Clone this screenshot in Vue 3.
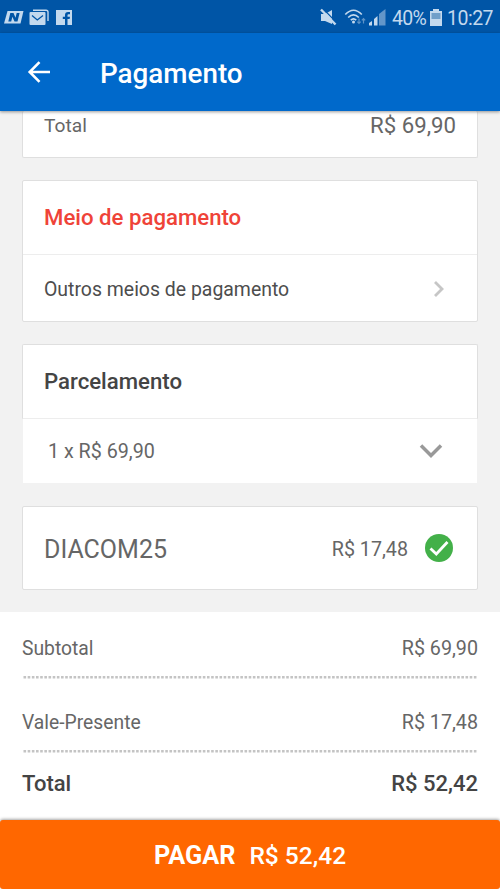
<script setup>
const rows = [
  { label: 'Subtotal', value: 'R$ 69,90' },
  { label: 'Vale-Presente', value: 'R$ 17,48' },
]
</script>

<template>
  <div class="screen">
    <div class="status">
      <svg class="notifications" viewBox="0 0 76 20" width="76" height="20">
        <path d="M7.500 3H23.500L20.500 15.500H4Z" fill="#c3d9ee" />
        <path d="M8.300 13.500 10.300 5h3.200l2 4.800L16.700 5h2.900l-2.100 8.500h-3l-2.100-4.800-1.200 4.800Z" fill="#0055a6" />
        <path d="M33 2.200H46Q48 2.200 48 4V13" fill="none" stroke="#c3d9ee" stroke-width="1.400" />
        <rect x="29.500" y="4" width="16" height="13" rx="1" fill="#c3d9ee" />
        <path d="M32 7.500 37.300 12 43 7.500" fill="none" stroke="#0055a6" stroke-width="1.300" />
        <rect x="56" y="2" width="16" height="15" fill="#c3d9ee" />
        <path d="M65 17V11H62.800V8.700H65V7Q65 4 68 4H70V6.300H68.500Q67.500 6.300 67.500 7.300V8.700H70L69.600 11H67.500V17Z" fill="#0055a6" />
      </svg>
      <div class="indicators">
        <svg viewBox="0 0 70 20" width="70" height="20">
          <path d="M3 6H7L14 2V16L7 13H3Z" fill="#c3d9ee" />
          <path d="M5.200 .800 19 15" stroke="#0055a6" stroke-width="1.200" />
          <path d="M3 1.500 17.500 16.500" stroke="#c3d9ee" stroke-width="2.400" />
          <path d="M27.300 6.500Q35.500 -2 43.800 6.500M30.200 9.500Q35.500 4.300 40.800 9.500M32.800 12.200Q35.500 9.700 38.200 12.200" fill="none" stroke="#c3d9ee" stroke-width="1.700" />
          <circle cx="35.500" cy="14" r="1.500" fill="#c3d9ee" />
          <path d="M41 10.500V15.500M39.300 13.700 41 15.500 42.700 13.700M45.500 15.500V10.500M43.800 12.300 45.500 10.500 47.200 12.300" fill="none" stroke="#5d93c7" stroke-width="1.200" />
          <path d="M51 15 54 13V17.500H51ZM56 11 59.500 8V17.500H56Z" fill="#c3d9ee" />
          <path d="M61 6 67.500 1V17.500H61Z" fill="#6396c9" />
        </svg>
        <span class="percent">40%</span>
        <svg class="battery" viewBox="0 0 12 18" width="12" height="18">
          <path d="M3 0H9V2H12V17H0V2H3Z" fill="#c3d9ee" />
          <path d="M1.500 4H10.500V10H1.500Z" fill="#709fc9" />
        </svg>
        <span class="clock">10:27</span>
      </div>
    </div>

    <header class="toolbar">
      <svg viewBox="0 0 24 22" width="24" height="22">
        <path d="M23 11H3M12.500 1.200 2.700 11 12.500 20.800" fill="none" stroke="#fff" stroke-width="2.600" />
      </svg>
      <h1>Pagamento</h1>
    </header>

    <main>
      <section class="card previous">
        <span>Total</span><span class="amount">R$ 69,90</span>
      </section>
      <section class="card method">
        <h2 class="red">Meio de pagamento</h2>
        <div class="line">
          <span>Outros meios de pagamento</span>
          <svg viewBox="0 0 12 18" width="12" height="18">
            <path d="M2 1 9 8 2 15" fill="none" stroke="#c6c6c6" stroke-width="2.800" />
          </svg>
        </div>
      </section>
      <section class="installments">
        <h2>Parcelamento</h2>
        <div class="line">
          <span>1 x R$ 69,90</span>
          <svg viewBox="0 0 24 16" width="24" height="16">
            <path d="M2 2.500 12 12.500 22 2.500" fill="none" stroke="#999" stroke-width="3.500" />
          </svg>
        </div>
      </section>
      <section class="card coupon">
        <span class="code">DIACOM25</span>
        <span class="discount">R$ 17,48</span>
        <svg viewBox="0 0 28 28" width="28" height="28">
          <circle cx="14" cy="14" r="14" fill="#43b049" />
          <path d="M5.500 14.500 11.300 20 22.500 8" fill="none" stroke="#fff" stroke-width="2.800" />
        </svg>
      </section>
    </main>

    <section class="summary">
      <template v-for="row in rows" :key="row.label">
        <div class="row"><span class="label">{{ row.label }}</span><span>{{ row.value }}</span></div>
        <svg class="dots" width="455" height="3" viewBox="0 0 455 3">
          <path d="M1.500 1.200H455" stroke="#c4c4c4" stroke-width="2.400" stroke-dasharray="2.600 1.570" />
        </svg>
      </template>
      <div class="row total"><span>Total</span><span>R$ 52,42</span></div>
    </section>

    <button class="pay"><b>PAGAR</b><span>R$ 52,42</span></button>
  </div>
</template>

<style>
body {
  margin: 0;
}
</style>

<style scoped>
.screen {
  width: 500px;
  height: 889px;
  overflow: hidden;
  display: flex;
  flex-direction: column;
  background: #fff;
  font-family: Roboto, sans-serif;
  color: #666;
  white-space: nowrap;
}
svg {
  display: block;
  flex: none;
}
.status {
  height: 33px;
  flex: none;
  box-sizing: border-box;
  padding: 8px 7px 0 0;
  display: flex;
  justify-content: space-between;
  background: #0055a6;
  color: #c3d9ee;
  line-height: 21px;
}
.indicators {
  display: flex;
}
.percent {
  width: 34px;
  margin-left: 4px;
  font-size: 19.5px;
  letter-spacing: -0.7px;
}
.battery {
  margin: 1px 5px 0 4px;
}
.clock {
  width: 46px;
  font-size: 19.5px;
  letter-spacing: -0.5px;
}
.toolbar {
  height: 78px;
  flex: none;
  box-sizing: border-box;
  padding: 1px 0 1px 27px;
  display: flex;
  align-items: center;
  gap: 49px;
  background: #0069cb;
  color: #fff;
  box-shadow: 0 1px 3px rgba(0, 0, 0, 0.4);
  z-index: 1;
}
h1 {
  margin: 3px 0 0;
  font-size: 27.8px;
  font-weight: 500;
}
main {
  height: 501px;
  flex: none;
  box-sizing: border-box;
  padding: 0 22px;
  background: #f2f2f2;
}
.card {
  box-sizing: border-box;
  border: 1.5px solid #dfdfdf;
  border-radius: 2px;
  background: #fff;
}
.previous {
  height: 47px;
  border-top: 0;
  padding: 0 21px;
  display: flex;
  justify-content: space-between;
  line-height: 30px;
  font-size: 19.2px;
}
.amount {
  font-size: 22.200px;
  line-height: 28px;
}
h2 {
  margin: 0;
  box-sizing: border-box;
  border-bottom: 1.5px solid #ededed;
  height: 74px;
  padding: 0 21px;
  line-height: 73px;
  font-size: 22.2px;
  font-weight: 500;
  color: #444;
}
.red {
  color: #ef4338;
}
.line {
  display: flex;
  align-items: center;
  justify-content: space-between;
}
.method {
  height: 142px;
  margin-top: 22px;
}
.method .line {
  height: 67px;
  padding: 2px 32px 0 21px;
  box-sizing: border-box;
  font-size: 19.45px;
  color: #4d4d4d;
}
.installments {
  height: 140px;
  margin-top: 22px;
}
.installments h2 {
  height: 75px;
  padding: 0 21px;
  line-height: 72px;
  border: 1px solid #dfdfdf;
  border-bottom-color: #ededed;
  border-radius: 2px 2px 0 0;
  background: #fff;
}
.installments .line {
  height: 64px;
  margin: 0 1px;
  padding: 0 34px 0 25px;
  background: #fff;
  font-size: 19.7px;
}
.coupon {
  height: 84px;
  margin-top: 22px;
  padding: 0 24px 0 21px;
  display: flex;
  align-items: center;
}
.code {
  flex: 1;
  font-size: 25px;
  padding-top: 2px;
}
.discount {
  margin-right: 17px;
  padding-top: 2px;
  font-size: 19.7px;
}
.summary {
  height: 208px;
  flex: none;
  padding: 0 22px;
}
.row {
  height: 64px;
  padding: 0;
  display: flex;
  justify-content: space-between;
  line-height: 73px;
  font-size: 19.7px;
}
.label {
  font-size: 19.3px;
  line-height: 74px;
}
.dots {
  margin-bottom: 7px;
}
.row.total {
  height: 60px;
  line-height: 48px;
  color: #444;
  font-weight: 500;
  font-size: 22px;
}
.pay {
  height: 69px;
  flex: none;
  box-sizing: border-box;
  border: 0;
  border-radius: 3px;
  padding: 2px 0 0;
  display: flex;
  align-items: center;
  justify-content: center;
  gap: 14px;
  background: #ff6700;
  color: #fff;
  font: 500 24.500px Roboto, sans-serif;
  box-shadow: 0 -1px 3px rgba(0, 0, 0, 0.35);
}
.pay b {
  font-weight: 700;
  font-size: 25.300px;
}
</style>
